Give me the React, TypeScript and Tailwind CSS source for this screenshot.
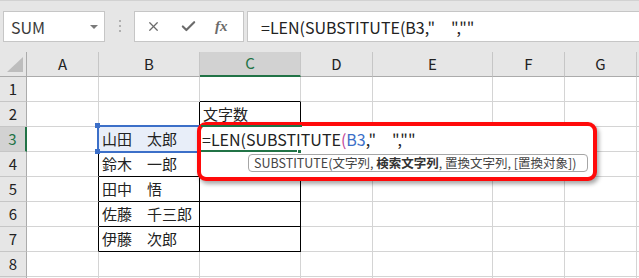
import { Check, X } from 'lucide-react';

const cols = ['A', 'B', 'C', 'D', 'E', 'F', 'G', ''];
const rows = [1, 2, 3, 4, 5, 6, 7, 8, 9];

const data: Record<string, string> = {
    C2: '文字数',
    B4: '鈴木　一郎',
    B5: '田中　悟',
    B6: '佐藤　千三郎',
    B7: '伊藤　次郎',
};

const formula = '=LEN(SUBSTITUTE(B3,"　",""';

export default function App() {
    return (
        <div className="w-[639px] h-[278px] overflow-hidden bg-white relative font-['Noto_Sans_CJK_JP',sans-serif] text-[#222]">
            {/* toolbar */}
            <div className="h-[52px] bg-[#e6e6e6] border-t border-[#d2d2d2] pt-[10px] flex items-start">
                <div className="ml-[3px] w-[102px] h-[31px] bg-white border border-[#c6c6c6] flex items-center justify-between pl-[7px] pr-[6px]">
                    <span className="text-[16px] text-[#3a3a3a]">SUM</span>
                    <span className="w-0 h-0 border-l-[4px] border-r-[4px] border-t-[4px] border-l-transparent border-r-transparent border-t-[#7a7a7a]" />
                </div>
                <div className="ml-[14px] mt-[9px] flex flex-col gap-[3px]">
                    <span className="w-[2px] h-[2px] bg-[#b0b0b0]" />
                    <span className="w-[2px] h-[2px] bg-[#b0b0b0]" />
                    <span className="w-[2px] h-[2px] bg-[#b0b0b0]" />
                </div>
                <div className="ml-[13px] w-[110px] h-[31px] bg-white border border-[#c6c6c6] flex items-center pl-[11px] text-[#6b6b6b]">
                    <X className="w-[15px] h-[15px]" strokeWidth={2} />
                    <Check className="w-[17px] h-[17px] ml-[19px]" strokeWidth={3} />
                    <span className="ml-[18px] italic font-semibold text-[15px] font-['Liberation_Serif',serif]">fx</span>
                </div>
                <div className="ml-[3px] flex-1 h-[31px] bg-white border border-[#c6c6c6] border-r-0 flex items-center pl-[13px] text-[16px] text-[#222] whitespace-pre">
                    {formula}
                </div>
            </div>

            {/* sheet grid */}
            <div className="grid grid-cols-[27px_72px_101px_101px_72px_120px_72px_72px_1fr] grid-rows-[25px_repeat(9,25px)]">
                <div className="bg-[#e6e6e6] border-r border-b border-r-[#ababab] border-b-[#ababab] relative">
                    <svg className="absolute left-[7px] top-[5px]" width="16" height="15" viewBox="0 0 16 15">
                        <polygon points="16,0 16,15 0,15" fill="#bdbdbd" />
                    </svg>
                </div>
                {cols.map((c, i) => (
                    <div
                        key={c + i}
                        className={`flex items-center justify-center text-[15px] border-r border-r-[#c6c6c6] ${c === 'C' ? 'bg-[#d2d2d2] border-b-2 border-b-[#217346] text-[#217346]' : 'bg-[#e6e6e6] border-b border-b-[#ababab] text-[#222]'}`}
                    >
                        {c}
                    </div>
                ))}
                {rows.map(r => (
                    <Row key={r} r={r} />
                ))}
            </div>

            {/* B3 range highlight */}
            <div className="absolute left-[97px] top-[125px] w-[106px] h-[28px] bg-[#e8eef9] border-2 border-[#3c6fc8] flex items-center pl-[3px] text-[15px]">
                山田　太郎
            </div>
            <span className="absolute left-[95px] top-[123px] w-[5px] h-[5px] bg-[#3c6fc8]" />
            <span className="absolute left-[95px] top-[149px] w-[5px] h-[5px] bg-[#3c6fc8]" />

            {/* annotation box */}
            <div className="absolute left-[197px] top-[122px] w-[400px] h-[59px] bg-white border-4 border-[#ff0a0a] rounded-[9px] shadow-[2px_3px_4px_rgba(0,0,0,0.35)]" />

            {/* edit cell */}
            <div className="absolute left-[201px] top-[125px] w-[101px] h-[2px] bg-[#217346]" />
            <div className="absolute left-[201px] top-[150px] w-[97px] h-[2px] bg-[#217346]" />
            <span className="absolute left-[297px] top-[149px] w-[5px] h-[5px] bg-[#217346] border border-white" />
            <div className="absolute left-[202px] top-[127px] h-[23px] flex items-center text-[16px] whitespace-pre">
                =LEN(SUBSTITUTE<span className="text-[#c2469a]">(</span>
                <span className="text-[#3c6fc8]">B3</span>,"　",""
            </div>

            {/* function tooltip */}
            <div className="absolute left-[248px] top-[154px] w-[340px] h-[18px] bg-white border border-[#a6a6a6] rounded-[4px] flex items-center pl-[5px] text-[12.5px] text-[#444] whitespace-pre">
                SUBSTITUTE(文字列, <b className="font-bold text-[#333]">検索文字列</b>, 置換文字列, [置換対象])
            </div>
        </div>
    );
}

const Row = ({ r }: { r: number }) => {
    return (
        <>
            <div
                className={`flex items-center justify-center text-[15px] border-b border-b-[#c6c6c6] ${r === 3 ? 'bg-[#d2d2d2] border-r-2 border-r-[#217346] text-[#217346]' : 'bg-[#e6e6e6] border-r border-r-[#ababab] text-[#222]'}`}
            >
                {r < 9 ? r : ''}
            </div>
            {cols.map((c, i) => {
                const key = c + r;
                const rightBlack =
                    (c === 'A' && r >= 3 && r <= 7) ||
                    (c === 'B' && r >= 2 && r <= 7) ||
                    (c === 'C' && r >= 2 && r <= 7);
                const bottomBlack =
                    (c === 'B' && r >= 2 && r <= 7) ||
                    (c === 'C' && r >= 1 && r <= 7);
                return (
                    <div
                        key={key + i}
                        className={`border-r border-b flex items-center pl-[3px] text-[15px] whitespace-pre ${rightBlack ? 'border-r-black' : 'border-r-[#d4d4d4]'} ${bottomBlack ? 'border-b-black' : 'border-b-[#d4d4d4]'}`}
                    >
                        {data[key] ?? ''}
                    </div>
                );
            })}
        </>
    );
};
